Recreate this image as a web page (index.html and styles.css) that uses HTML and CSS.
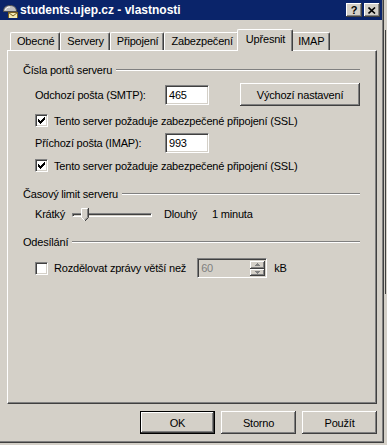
FILE: index.html
```html
<!DOCTYPE html>
<html lang="cs">
<head>
  <meta charset="UTF-8" />
  <title>students.ujep.cz - vlastnosti</title>
  <link rel="stylesheet" href="styles.css">
</head>
<body>

<div class="screen">
  <div class="window">
    <div class="titlebar">
      <svg class="app-icon" width="16" height="16" viewBox="0 0 16 16">
        <path d="M1.5 9.5C1.5 5.5 4 3.5 8 3.5C12 3.5 14.5 5.5 14.5 9.5Z" fill="#c0c0c0" stroke="#505050"/>
        <path d="M3.5 8C4 6 5.5 5 8 5" fill="none" stroke="#fff"/>
        <rect x="6.5" y="10.5" width="9" height="6" fill="#f3eab0" stroke="#7a6020"/>
        <path d="M6.5 10.5L11 14L15.5 10.5" fill="none" stroke="#7a6020"/>
      </svg>
      <span class="title">students.ujep.cz - vlastnosti</span>
      <div class="caption-btns">
        <span class="cap-btn">?</span>
        <span class="cap-btn">
          <svg width="8" height="7" viewBox="0 0 8 7"><path d="M0.5 0.5L7 6.5M7 0.5L0.5 6.5" stroke="#000" stroke-width="1.6"/></svg>
        </span>
      </div>
    </div>

    <div class="dialog-body">
      <div class="tabs">
        <div class="tab">Obecné</div>
        <div class="tab">Servery</div>
        <div class="tab">Připojení</div>
        <div class="tab">Zabezpečení</div>
        <div class="tab active">Upřesnit</div>
        <div class="tab">IMAP</div>
      </div>

      <div class="panel">
        <div class="group-head"><span>Čísla portů serveru</span><div class="rule"></div></div>
        <div class="group-body">
          <div class="row row-smtp">
            <span class="field-label">Odchozí pošta (SMTP):</span>
            <div class="field">465</div>
            <button class="btn btn-wide">Výchozí nastavení</button>
          </div>
          <div class="check-row chk-1"><span class="check checked"><svg width="7" height="7" viewBox="0 0 7 7"><path d="M0 2h1v1h1v1h1v-1h1v-1h1v-1h1v-1h1v3h-1v1h-1v1h-1v1h-1v1h-1v-1h-1v-1h-1z" fill="#000"/></svg></span>Tento server požaduje zabezpečené připojení (SSL)</div>
          <div class="row row-imap">
            <span class="field-label">Příchozí pošta (IMAP):</span>
            <div class="field">993</div>
          </div>
          <div class="check-row chk-2"><span class="check checked"><svg width="7" height="7" viewBox="0 0 7 7"><path d="M0 2h1v1h1v1h1v-1h1v-1h1v-1h1v-1h1v3h-1v1h-1v1h-1v1h-1v1h-1v-1h-1v-1h-1z" fill="#000"/></svg></span>Tento server požaduje zabezpečené připojení (SSL)</div>
        </div>

        <div class="group-head head-2"><span>Časový limit serveru</span><div class="rule"></div></div>
        <div class="group-body">
          <div class="row slider-row">
            <span>Krátký</span>
            <div class="slider">
              <div class="slider-track"></div>
              <svg class="slider-thumb" width="8" height="13" viewBox="0 0 8 13">
                <path d="M0 0H8V9L4 13L0 9Z" fill="#d4d0c8"/>
                <path d="M0.5 9.5V0.5H6.5M0.5 9.5L3.5 12.5" stroke="#fff" fill="none"/>
                <path d="M7.5 0V9.5L4 13" stroke="#404040" fill="none"/>
                <path d="M6.5 1V9.2L3.7 12" stroke="#808080" fill="none"/>
              </svg>
            </div>
            <span>Dlouhý</span>
            <span class="timeout-value">1 minuta</span>
          </div>
        </div>

        <div class="group-head head-3"><span>Odesílání</span><div class="rule"></div></div>
        <div class="group-body">
          <div class="row split-row">
            <span class="check"></span>
            <span>Rozdělovat zprávy větší než</span>
            <div class="spin">
              <span class="spin-value">60</span>
              <div class="spin-btns">
                <span class="spin-btn"><svg width="5" height="3" viewBox="0 0 5 3"><path d="M2 0h1v1h1v1h1v1h-5v-1h1v-1h1z" fill="#808080"/></svg></span>
                <span class="spin-btn"><svg width="5" height="3" viewBox="0 0 5 3"><path d="M0 0h5v1h-1v1h-1v1h-1v-1h-1v-1h-1z" fill="#808080"/></svg></span>
              </div>
            </div>
            <span>kB</span>
          </div>
        </div>
      </div>

      <div class="buttons">
        <button class="btn btn-default">OK</button>
        <button class="btn">Storno</button>
        <button class="btn">Použít</button>
      </div>
    </div>
  </div>
  <div class="behind"><div class="behind-line"></div></div>
</div>

</body>
</html>
```

FILE: styles.css
```css
body {
  margin: 0;
  font-family: "Liberation Sans", Arial, sans-serif;
  font-size: 11px;
  letter-spacing: -0.2px;
  color: #000;
  background: #d4d0c8;
}
.screen {
  display: flex;
  width: 387px;
  height: 445px;
  overflow: hidden;
}
.window {
  width: 384px;
  height: 443px;
  flex: none;
  box-sizing: border-box;
  padding: 0 2px 2px 0;
  background: #d4d0c8;
  box-shadow: inset -1px -1px #404040, inset -2px -2px #808080;
  display: flex;
  flex-direction: column;
}
.titlebar {
  height: 20px;
  flex: none;
  background: #0a246a;
  color: #fff;
  display: flex;
  align-items: center;
  padding: 0 2px;
}
.app-icon { margin-right: 2px; flex: none; }
.title {
  flex: 1;
  font-weight: bold;
  font-size: 12px;
  letter-spacing: 0;
}
.caption-btns { display: flex; gap: 2px; }
.cap-btn {
  width: 16px;
  height: 14px;
  box-sizing: border-box;
  background: #d4d0c8;
  box-shadow: inset -1px -1px #404040, inset 1px 1px #fff, inset -2px -2px #808080;
  display: flex;
  align-items: center;
  justify-content: center;
  color: #000;
  font-weight: bold;
  font-size: 11px;
  letter-spacing: 0;
}

.dialog-body {
  flex: 1;
  display: flex;
  flex-direction: column;
  padding: 9px 5px 0 7px;
}
.tabs {
  display: flex;
  align-items: flex-end;
  height: 21px;
  padding-left: 3px;
  position: relative;
  z-index: 1;
}
.tab {
  height: 18px;
  box-sizing: border-box;
  padding: 0 5px 0 6px;
  border-top: 1px solid #fff;
  border-left: 1px solid #fff;
  border-right: 1px solid #404040;
  border-radius: 2px 2px 0 0;
  box-shadow: inset -1px 0 #808080;
  line-height: 17px;
  white-space: nowrap;
}
.tab.active {
  height: 22px;
  margin: 0 -2px -1px;
  padding: 0 7px 0 8px;
  line-height: 19px;
  background: #d4d0c8;
  position: relative;
  z-index: 2;
}

.panel {
  height: 354px;
  box-sizing: border-box;
  border: 1px solid;
  border-color: #fff #404040 #404040 #fff;
  box-shadow: inset -1px -1px #808080;
  padding: 12px 16px 0 15px;
  display: flex;
  flex-direction: column;
}
.group-head {
  display: flex;
  align-items: center;
  height: 14px;
}
.group-head .rule {
  flex: 1;
  margin-left: 4px;
  border-top: 1px solid #808080;
  border-bottom: 1px solid #fff;
}
.head-2 { margin-top: 15px; }
.head-3 { margin-top: 11px; }
.group-body {
  display: flex;
  flex-direction: column;
  padding-left: 12px;
}
.row {
  display: flex;
  align-items: center;
}
.row-smtp { height: 23px; margin-top: 6px; }
.row-imap { height: 21px; margin-top: 5px; }
.field-label { width: 130px; }
.field {
  width: 44px;
  height: 20px;
  box-sizing: border-box;
  background: #fff;
  border: 1px solid;
  border-color: #808080 #fff #fff #808080;
  box-shadow: inset 1px 1px #404040, inset -1px -1px #d4d0c8;
  padding: 0 3px;
  line-height: 18px;
}

.check-row {
  display: flex;
  align-items: center;
  height: 13px;
  white-space: nowrap;
}
.chk-1 { margin-top: 8px; }
.chk-2 { margin-top: 6px; }
.check {
  width: 13px;
  height: 13px;
  flex: none;
  box-sizing: border-box;
  background: #fff;
  border: 1px solid;
  border-color: #808080 #fff #fff #808080;
  box-shadow: inset 1px 1px #404040, inset -1px -1px #d4d0c8;
  margin-right: 6px;
  display: flex;
  align-items: center;
  justify-content: center;
}

.slider-row { height: 20px; margin-top: 3px; }
.slider {
  width: 80px;
  height: 20px;
  position: relative;
  margin: 0 12px 0 7px;
}
.slider-track {
  position: absolute;
  left: 0;
  right: 0;
  top: 9px;
  height: 4px;
  box-sizing: border-box;
  border: 1px solid;
  border-color: #808080 #fff #fff #808080;
  box-shadow: inset 1px 1px #404040;
}
.slider-thumb {
  position: absolute;
  left: 9px;
  top: 4px;
}
.timeout-value { margin-left: 15px; }

.split-row { height: 20px; margin-top: 9px; }
.spin {
  display: flex;
  width: 70px;
  height: 20px;
  box-sizing: border-box;
  border: 1px solid;
  border-color: #808080 #fff #fff #808080;
  box-shadow: inset 1px 1px #404040, inset -1px -1px #d4d0c8;
  padding: 2px 1px 1px 2px;
  margin: 0 7px 0 11px;
}
.spin-value {
  flex: 1;
  color: #808080;
  padding-left: 1px;
  line-height: 15px;
}
.spin-btns {
  width: 15px;
  display: flex;
  flex-direction: column;
}
.spin-btn {
  flex: 1;
  background: #d4d0c8;
  box-shadow: inset -1px -1px #404040, inset 1px 1px #fff, inset -2px -2px #808080;
  display: flex;
  align-items: center;
  justify-content: center;
}

.buttons {
  display: flex;
  justify-content: flex-end;
  gap: 6px;
  margin-top: 7px;
}
.btn {
  width: 75px;
  height: 23px;
  box-sizing: border-box;
  padding: 0;
  border: none;
  background: #d4d0c8;
  font: inherit;
  letter-spacing: inherit;
  color: #000;
  box-shadow: inset -1px -1px #404040, inset 1px 1px #fff, inset -2px -2px #808080;
}
.btn-wide { width: 120px; margin-left: auto; }
.btn-default { border: 1px solid #000; }

.behind {
  flex: 1;
  padding: 30px 0 0 1px;
}
.behind-line {
  height: 264px;
  border-left: 1px solid #404040;
}
```
